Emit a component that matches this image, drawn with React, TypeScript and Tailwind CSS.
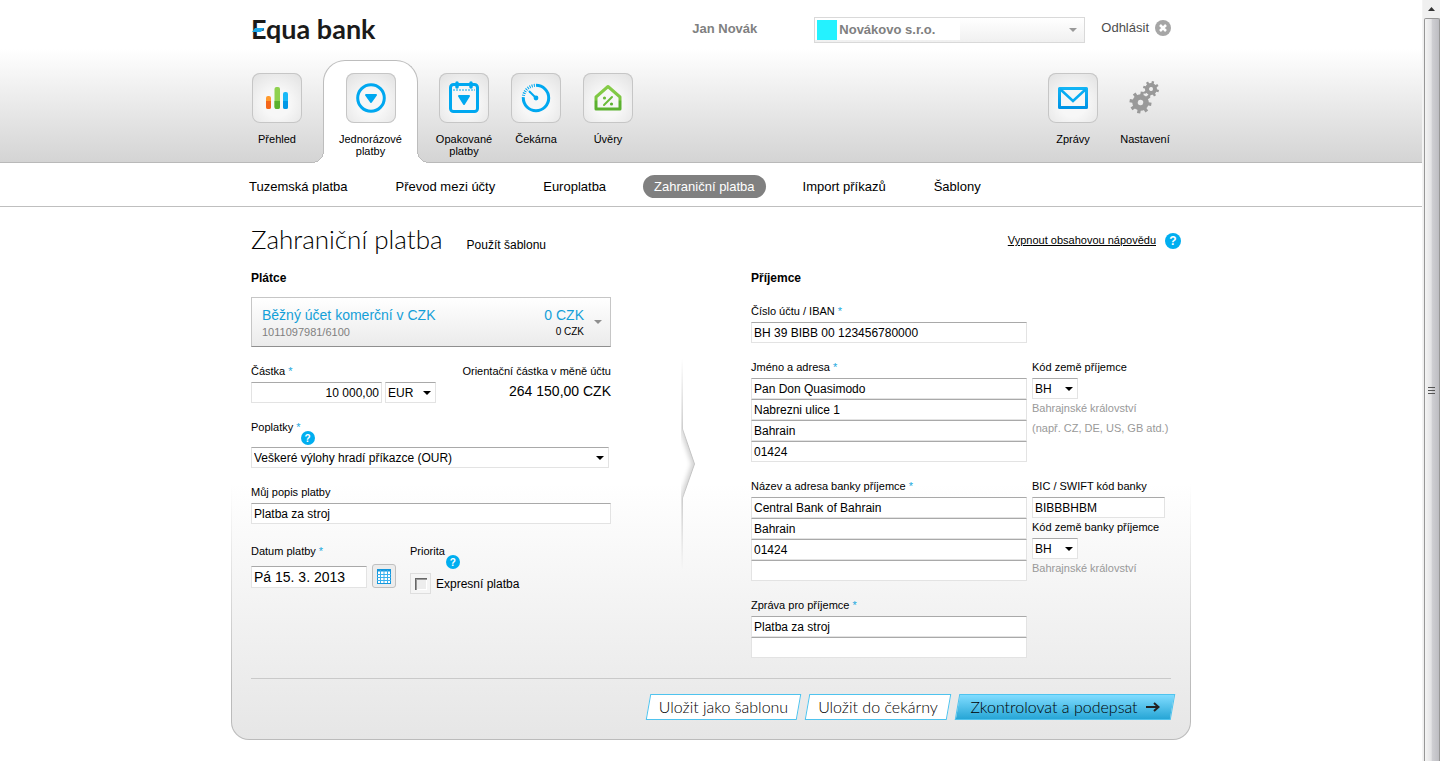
import React from 'react';
import clsx from 'clsx';

interface NavItem {
    label: string;
    icon: React.ReactNode;
    active?: boolean;
    plain?: boolean;
}

const BLUE = '#00a8f0';

const BarsIcon = () => (
    <svg viewBox="0 0 50 50" className="h-full w-full" aria-hidden="true">
        <rect x="14" y="23" width="5" height="13" rx="2" fill="#ff9a2e" />
        <path d="M14 28h5v6a2 2 0 0 1-2 2h-1a2 2 0 0 1-2-2z" fill="#f4661b" />
        <rect x="22.5" y="14" width="5.5" height="22" rx="2" fill="#8fd14f" />
        <path d="M22.5 28H28v6a2 2 0 0 1-2 2h-1.500a2 2 0 0 1-2-2z" fill="#5bb12f" />
        <rect x="31" y="19" width="5" height="17" rx="2" fill="#19b9f7" />
        <path d="M31 28h5v6a2 2 0 0 1-2 2h-1a2 2 0 0 1-2-2z" fill="#0098e6" />
    </svg>
);

const PaymentIcon = () => (
    <svg viewBox="0 0 50 50" className="h-full w-full" aria-hidden="true">
        <circle cx="25" cy="25" r="13.3" fill="none" stroke={BLUE} strokeWidth="3" />
        <path d="M20 22h10l-5 7z" fill={BLUE} stroke={BLUE} strokeWidth="2" strokeLinejoin="round" />
    </svg>
);

const CalendarIcon = () => (
    <svg viewBox="0 0 50 50" className="h-full w-full" aria-hidden="true">
        <rect x="11.5" y="11.5" width="27" height="27" rx="3" fill="none" stroke={BLUE} strokeWidth="3" />
        <path d="M18 10v4M32 10v4" stroke={BLUE} strokeWidth="3.5" strokeLinecap="round" />
        <path d="M14 17h22" stroke={BLUE} strokeWidth="1" strokeDasharray="2 1" />
        <path d="M20 23h10l-5 8z" fill={BLUE} stroke={BLUE} strokeWidth="2" strokeLinejoin="round" />
    </svg>
);

const GaugeIcon = () => (
    <svg viewBox="0 0 50 50" className="h-full w-full" aria-hidden="true">
        <path d="M25 12.3A12.7 12.7 0 1 1 12.3 25" fill="none" stroke={BLUE} strokeWidth="3" />
        <path d="M12.3 25A12.7 12.7 0 0 1 25 12.3" fill="none" stroke={BLUE} strokeWidth="3" strokeDasharray="1 1.2" />
        <circle cx="25" cy="25" r="2.4" fill={BLUE} />
        <path d="M18.5 18.5L25 25" stroke={BLUE} strokeWidth="2" strokeLinecap="round" />
    </svg>
);

const HouseIcon = () => (
    <svg viewBox="0 0 50 50" className="h-full w-full" aria-hidden="true">
        <defs>
            <linearGradient id="house" x1="0" y1="0" x2="0" y2="1">
                <stop offset="0" stopColor="#86cc48" />
                <stop offset="0.6" stopColor="#7cc642" />
                <stop offset="0.65" stopColor="#5bb12f" />
                <stop offset="1" stopColor="#5bb12f" />
            </linearGradient>
        </defs>
        <path d="M13 36V24L25 13.5 37 24v12z" fill="none" stroke="url(#house)" strokeWidth="3" strokeLinejoin="round" />
        <path d="M21 32l8-8" stroke="#6abc38" strokeWidth="2" strokeLinecap="round" />
        <circle cx="21.5" cy="25" r="1.6" fill="#6abc38" />
        <circle cx="28.5" cy="31" r="1.6" fill="#5bb12f" />
    </svg>
);

const MailIcon = () => (
    <svg viewBox="0 0 50 50" className="h-full w-full" aria-hidden="true">
        <defs>
            <linearGradient id="mail" x1="0" y1="0" x2="0" y2="1">
                <stop offset="0" stopColor="#12b4f5" />
                <stop offset="1" stopColor="#0094e6" />
            </linearGradient>
        </defs>
        <rect x="11.5" y="15.5" width="27" height="19" fill="none" stroke="url(#mail)" strokeWidth="3" strokeLinejoin="round" />
        <path d="M12 16l13 12 13-12" fill="none" stroke="#08acf3" strokeWidth="2.5" />
    </svg>
);

const GearShape = ({ cx, cy, r, turn }: { cx: number; cy: number; r: number; turn: number }) => (
    <g transform={`translate(${cx} ${cy}) rotate(${turn})`} stroke="#999" fill="none">
        <circle r={r * 0.5} strokeWidth={r * 0.5} />
        {[0, 45, 90, 135].map(a => (
            <g key={a} transform={`rotate(${a})`}>
                <path d={`M0 ${-r}V${-r * 0.6}M0 ${r * 0.6}V${r}`} strokeWidth={r * 0.3} />
            </g>
        ))}
    </g>
);

const GearsIcon = () => (
    <svg viewBox="0 0 50 50" className="h-full w-full" aria-hidden="true">
        <GearShape cx={20.5} cy={29.5} r={11} turn={10} />
        <GearShape cx={31} cy={16} r={8} turn={15} />
    </svg>
);

const HelpIcon = ({ className }: { className: string }) => (
    <button
        type="button"
        aria-label="Nápověda"
        className={clsx('flex shrink-0 items-center justify-center rounded-full bg-[#00aef0] font-bold text-white', className)}
    >
        ?
    </button>
);

const Arrow = ({ className = 'right-[5px] text-black' }: { className?: string }) => (
    <svg viewBox="0 0 8 4" className={clsx('pointer-events-none absolute top-1/2 h-1 w-2 -translate-y-1/2', className)} aria-hidden="true">
        <path d="M0 0h8L4 4z" fill="currentColor" />
    </svg>
);

const FIELD = 'block border border-[#e3e3e3] border-t-[#a9a9a9] bg-white text-black outline-none';

const Label = ({ htmlFor, text, required }: { htmlFor: string; text: string; required?: boolean }) => (
    <label htmlFor={htmlFor} className="block h-[14px] whitespace-nowrap text-[11px] leading-[14px]">
        {text}
        {required && <span className="text-[#1ba8de]"> *</span>}
    </label>
);

const TextInput = ({ className, ...props }: React.InputHTMLAttributes<HTMLInputElement>) => (
    <input type="text" className={clsx(FIELD, 'h-[21px] px-[2px] text-[12px]', className)} {...props} />
);

const Select = ({ id, options, className }: { id: string; options: string[]; className: string }) => (
    <div className={clsx('relative', className)}>
        <select id={id} className={clsx(FIELD, 'h-[21px] w-full appearance-none px-[2px] text-[12px]')}>
            {options.map(o => (
                <option key={o}>{o}</option>
            ))}
        </select>
        <Arrow />
    </div>
);

const Lines = ({ id, label, values }: { id: string; label: string; values: string[] }) => (
    <div>
        <Label htmlFor={`${id}-0`} text={label} required />
        <div className="mt-1">
            {values.map((v, i) => (
                <TextInput key={i} id={`${id}-${i}`} aria-label={`${label} ${i + 1}`} defaultValue={v} className="w-[276px]" />
            ))}
        </div>
    </div>
);

const leftNav: NavItem[] = [
    { label: 'Přehled', icon: <BarsIcon /> },
    { label: 'Jednorázové platby', icon: <PaymentIcon />, active: true },
    { label: 'Opakované platby', icon: <CalendarIcon /> },
    { label: 'Čekárna', icon: <GaugeIcon /> },
    { label: 'Úvěry', icon: <HouseIcon /> },
];

const rightNav: NavItem[] = [
    { label: 'Zprávy', icon: <MailIcon /> },
    { label: 'Nastavení', icon: <GearsIcon />, plain: true },
];

const subNav = ['Tuzemská platba', 'Převod mezi účty', 'Europlatba', 'Zahraniční platba', 'Import příkazů', 'Šablony'];

const NavTab = ({ label, icon, active, plain }: NavItem) => (
    <a
        href="#"
        className={clsx(
            'relative flex flex-col items-center text-center',
            active
                ? 'mx-[10px] -mb-px w-[95px] rounded-t-[22px] border border-b-0 border-[#bdbdbd] bg-white pt-3'
                : 'w-[72px] pt-[13px]'
        )}
    >
        {active && (
            <>
                {/* flared feet that run into the header's bottom line */}
                <span className="absolute bottom-0 -left-[12px] h-3 w-3 bg-[radial-gradient(circle_at_0_0,transparent_11px,#bdbdbd_11px,#bdbdbd_12px,#fff_12px)]" />
                <span className="absolute -right-[12px] bottom-0 h-3 w-3 bg-[radial-gradient(circle_at_100%_0,transparent_11px,#bdbdbd_11px,#bdbdbd_12px,#fff_12px)]" />
            </>
        )}
        <span
            className={clsx(
                'h-[50px] w-[50px]',
                !plain && 'rounded-[8px] bg-[radial-gradient(circle_at_50%_60%,#f7f7f7_35%,#e0e0e0_100%)] shadow-[inset_0_0_0_1px_#c6c6c6]'
            )}
        >
            {icon}
        </span>
        <span className="mt-[10px] px-1 text-[11px] leading-3">{label}</span>
    </a>
);

const Header = () => (
    <header className="border-b border-[#b9b9b9] bg-[linear-gradient(to_bottom,#fff_30%,#d4d4d4_100%)]">
        <div className="mx-auto w-[960px]">
            <div className="flex h-[60px] items-start px-5">
                <a href="#" className="relative mt-[13px] font-['Lato'] text-[27px] leading-8 font-bold whitespace-nowrap text-[#1a1a1a]">
                    Equa bank
                    <span className="absolute top-[15px] left-px h-1 w-3 bg-[#1ba8e8] [clip-path:polygon(25%_0,100%_0,75%_100%,0_100%)]" />
                </a>
                <div className="ml-auto flex items-start pt-[17px]">
                    <span className="mr-[57px] text-[13px] leading-6 font-bold text-[#808080]">Jan Novák</span>
                    <div className="relative w-[271px]">
                        <select
                            aria-label="Klient"
                            className="block h-[26px] w-full appearance-none border border-[#d9d9d9] bg-[linear-gradient(#fff,#fff),linear-gradient(to_bottom,#fff,#f0f0f0)] bg-[length:145px_22px,100%_100%] bg-no-repeat pl-6 text-[13px] font-bold text-[#808080]"
                        >
                            <option>Novákovo s.r.o.</option>
                        </select>
                        <span className="absolute top-[3px] left-[3px] h-5 w-5 bg-[#24f2ff]" />
                        <Arrow className="right-2 text-[#999]" />
                    </div>
                    <a href="#" className="ml-4 flex h-[22px] items-center gap-[6px] text-[13px] text-[#4d4d4d]">
                        Odhlásit
                        <svg viewBox="0 0 16 16" className="h-4 w-4" aria-hidden="true">
                            <circle cx="8" cy="8" r="8" fill="#a6a6a6" />
                            <path d="M5 5l6 6M11 5l-6 6" stroke="#fff" strokeWidth="2.5" />
                        </svg>
                    </a>
                </div>
            </div>
            <nav className="flex h-[102px] px-[10px]">
                {leftNav.map(item => (
                    <NavTab key={item.label} {...item} />
                ))}
                <div className="ml-auto flex">
                    {rightNav.map(item => (
                        <NavTab key={item.label} {...item} />
                    ))}
                </div>
            </nav>
        </div>
    </header>
);

const SubNav = () => (
    <nav className="border-b border-[#bfbfbf] bg-white">
        <div className="mx-auto flex h-[43px] w-[960px] items-center gap-[26px] pt-1 pl-[7px]">
            {subNav.map(item => (
                <a
                    key={item}
                    href="#"
                    className={clsx(
                        'h-[23px] rounded-full px-[11px] text-[13px] leading-[23px] whitespace-nowrap',
                        item === 'Zahraniční platba' && 'bg-[#808080] text-white'
                    )}
                >
                    {item}
                </a>
            ))}
        </div>
    </nav>
);

const Payer = () => (
    <section className="w-[360px]">
        <h2 className="text-[12px] leading-4 font-bold">Plátce</h2>
        <button
            type="button"
            aria-haspopup="listbox"
            className="relative mt-[11px] flex h-[50px] w-full items-center justify-between border border-[#c6c6c6] border-b-[#8f8f8f] bg-[linear-gradient(to_bottom,#fff,#ebebeb)] pt-[2px] pr-[26px] pl-[10px]"
        >
            <span className="text-left">
                <span className="block text-[14px] leading-[18px] text-[#149fd8]">Běžný účet komerční v CZK</span>
                <span className="block text-[11px] leading-4 text-[#808080]">1011097981/6100</span>
            </span>
            <span className="text-right">
                <span className="block text-[14px] leading-[18px] text-[#149fd8]">0 CZK</span>
                <span className="block text-[10px] leading-4">0 CZK</span>
            </span>
            <Arrow className="right-2 text-[#8f8f8f]" />
        </button>

        <div className="mt-[17px] flex justify-between">
            <div>
                <Label htmlFor="amount" text="Částka" required />
                <div className="mt-1 flex gap-[3px]">
                    <TextInput id="amount" defaultValue="10 000,00" className="w-[131px] text-right" />
                    <Select id="currency" options={['EUR', 'CZK', 'USD']} className="w-[51px]" />
                </div>
            </div>
            <div className="text-right">
                <p className="text-[11px] leading-[14px]">Orientační částka v měně účtu</p>
                <p className="mt-1 text-[14px] leading-[18px]">264 150,00 CZK</p>
            </div>
        </div>

        <div className="mt-[17px]">
            <div className="flex h-[27px]">
                <Label htmlFor="fees" text="Poplatky" required />
                <HelpIcon className="mt-[11px] h-[14px] w-[14px] text-[10px]" />
            </div>
            <Select id="fees" options={['Veškeré výlohy hradí příkazce (OUR)']} className="w-[358px]" />
        </div>

        <div className="mt-[17px]">
            <Label htmlFor="note" text="Můj popis platby" />
            <TextInput id="note" defaultValue="Platba za stroj" className="mt-1 w-full" />
        </div>

        <div className="mt-5 flex">
            <div className="w-[159px]">
                <Label htmlFor="date" text="Datum platby" required />
                <div className="mt-[6px] flex items-end gap-[5px]">
                    <input id="date" type="text" defaultValue="Pá 15. 3. 2013" className={clsx(FIELD, 'h-[22px] w-[116px] px-[2px] text-[14px]')} />
                    <button type="button" aria-label="Vybrat datum" className="h-6 w-6 rounded-[3px] border border-[#c0c0c0] bg-[#ececec] p-[3px]">
                        <svg viewBox="0 0 16 16" className="h-4 w-4" aria-hidden="true">
                            <rect x="1.5" y="1.5" width="13" height="14" fill="#fff" stroke="#1597dc" />
                            <path d="M1 2.5h14" stroke="#1597dc" strokeWidth="2" />
                            <path d="M1 6.5h14M1 9.5h14M1 12.5h14M4.5 2v13M8 2v13M11.5 2v13" stroke="#39b1ee" />
                        </svg>
                    </button>
                </div>
            </div>
            <div>
                <div className="flex h-[25px]">
                    <Label htmlFor="express" text="Priorita" />
                    <HelpIcon className="mt-[11px] ml-px h-[14px] w-[14px] text-[10px]" />
                </div>
                <label className="mt-1 flex items-center gap-[5px] text-[12px]">
                    <span className="flex h-[21px] w-[21px] items-center justify-center border border-[#dedede] bg-[#f5f5f5]">
                        <input
                            id="express"
                            type="checkbox"
                            className="h-3 w-3 appearance-none bg-[#ededed] shadow-[inset_1px_1px_0_#666,inset_2px_2px_0_#999,inset_-1px_-1px_0_#fff]"
                        />
                    </span>
                    Expresní platba
                </label>
            </div>
        </div>
    </section>
);

// Soft-shadowed rule pointing from the payer to the payee
const Divider = () => (
    <div className="w-[140px] pt-[88px] pl-[60px]">
        <svg viewBox="0 0 26 212" className="h-[212px] w-[26px]" aria-hidden="true">
            <defs>
                <linearGradient id="fade" x1="0" y1="0" x2="0" y2="1">
                    <stop offset="0" stopColor="#fff" stopOpacity="0" />
                    <stop offset="0.4" stopColor="#fff" />
                    <stop offset="0.6" stopColor="#fff" />
                    <stop offset="1" stopColor="#fff" stopOpacity="0" />
                </linearGradient>
                <mask id="fadeMask">
                    <rect width="26" height="212" fill="url(#fade)" />
                </mask>
                <filter id="soft" filterUnits="userSpaceOnUse" x="-6" y="-6" width="40" height="224">
                    <feGaussianBlur stdDeviation="2.5" />
                </filter>
                <clipPath id="leftSide">
                    <path d="M0 0H11.5V71L23.5 106L11.5 140V212H0z" />
                </clipPath>
            </defs>
            <g mask="url(#fadeMask)">
                <g clipPath="url(#leftSide)">
                    <path d="M11.5 0V71L23.5 106L11.5 140V212" fill="none" stroke="#000" strokeOpacity="0.25" strokeWidth="4" filter="url(#soft)" />
                </g>
                <path d="M11.5 0V71L23.5 106L11.5 140V212" fill="none" stroke="#c4c4c4" strokeWidth="1" />
            </g>
        </svg>
    </div>
);

const Payee = () => (
    <section className="flex-1">
        <h2 className="text-[12px] leading-4 font-bold">Příjemce</h2>
        <div className="mt-[18px] flex flex-col gap-[17px]">
            <Lines id="iban" label="Číslo účtu / IBAN" values={['BH 39 BIBB 00 123456780000']} />
            <div className="flex gap-[5px]">
                <Lines id="name" label="Jméno a adresa" values={['Pan Don Quasimodo', 'Nabrezni ulice 1', 'Bahrain', '01424']} />
                <div>
                    <Label htmlFor="country" text="Kód země příjemce" />
                    <Select id="country" options={['BH', 'CZ', 'DE']} className="mt-1 w-[46px]" />
                    <p className="mt-[2px] text-[11px] leading-[14px] text-[#999]">Bahrajnské království</p>
                    <p className="mt-[6px] text-[11px] leading-[14px] text-[#999]">(např. CZ, DE, US, GB atd.)</p>
                </div>
            </div>
            <div className="flex gap-[5px]">
                <Lines id="bank" label="Název a adresa banky příjemce" values={['Central Bank of Bahrain', 'Bahrain', '01424', '']} />
                <div>
                    <Label htmlFor="bic" text="BIC / SWIFT kód banky" />
                    <TextInput id="bic" defaultValue="BIBBBHBM" className="mt-1 mb-[2px] w-[133px]" />
                    <Label htmlFor="bankCountry" text="Kód země banky příjemce" />
                    <Select id="bankCountry" options={['BH', 'CZ', 'DE']} className="mt-1 w-[46px]" />
                    <p className="mt-[2px] text-[11px] leading-[14px] text-[#999]">Bahrajnské království</p>
                </div>
            </div>
            <Lines id="message" label="Zpráva pro příjemce" values={['Platba za stroj', '']} />
        </div>
    </section>
);

const SlantButton = ({ primary, className, children }: { primary?: boolean; className: string; children: React.ReactNode }) => (
    <button type={primary ? 'submit' : 'button'} className={clsx("relative h-[26px] font-['Lato'] text-[16px] font-light whitespace-nowrap", className)}>
        <span
            className={clsx(
                'absolute inset-0 -skew-x-[10deg] border border-[#4fc3ee]',
                primary ? 'bg-[linear-gradient(to_bottom,#80dcff,#27a6d6)]' : 'bg-white'
            )}
        />
        <span className="relative flex items-center justify-center gap-2">{children}</span>
    </button>
);

const Scrollbar = () => (
    <div className="flex w-[18px] flex-col border-l border-[#f4f4f4] bg-[#f0f0f0]" aria-hidden="true">
        <div className="flex h-[18px] items-center justify-center">
            <svg viewBox="0 0 7 4" className="h-1 w-[7px]">
                <path d="M0 4h7L3.5 0z" fill="#333" />
            </svg>
        </div>
        <div className="ml-px flex flex-1 items-center justify-center rounded-t-[2px] border border-b-0 border-[#979797] bg-[linear-gradient(to_right,#f4f4f4,#e3e3e5_45%,#cfcfd3_50%,#bdbdc2)]">
            <svg viewBox="0 0 8 8" className="h-2 w-2">
                <path d="M0 1.5h7M0 4.5h7M0 7.5h7" stroke="#555" />
            </svg>
        </div>
    </div>
);

const App: React.FC = () => {
    return (
        <div className="flex min-h-screen bg-white font-['Liberation_Sans',Arial,sans-serif] text-black">
            <div className="flex-1">
                <Header />
                <SubNav />
                <main className="mx-auto w-[960px] rounded-b-[18px] bg-[linear-gradient(to_bottom,#fff_52%,#bbb_90%)] px-px pb-px">
                    <form
                        onSubmit={e => e.preventDefault()}
                        className="rounded-b-[17px] bg-[linear-gradient(to_bottom,#fff_52%,#e6e6e6_100%)] px-[19px] pt-[19px] pb-[19px]"
                    >
                        <div className="flex h-[29px] items-baseline">
                            <h1 className="font-['Lato'] text-[26px] leading-[26px] font-light">Zahraniční platba</h1>
                            <a href="#" className="ml-6 text-[12px]">Použít šablonu</a>
                            <div className="-mr-[10px] ml-auto flex items-center gap-[9px] self-center">
                                <a href="#" className="text-[11px] underline">Vypnout obsahovou nápovědu</a>
                                <HelpIcon className="h-4 w-4 text-[12px]" />
                            </div>
                        </div>
                        <div className="mt-[15px] flex">
                            <Payer />
                            <Divider />
                            <Payee />
                        </div>
                        <div className="mt-5 flex justify-end gap-[8px] border-t border-[#c9c9c9] pt-[15px]">
                            <SlantButton className="w-[151px]">Uložit jako šablonu</SlantButton>
                            <SlantButton className="w-[142px]">Uložit do čekárny</SlantButton>
                            <SlantButton primary className="-mr-[2px] w-[216px]">
                                Zkontrolovat a podepsat
                                <svg viewBox="0 0 14 10" className="h-[10px] w-[14px]" aria-hidden="true">
                                    <path d="M0 5h12M8 1l4.500 4L8 9" fill="none" stroke="#222" strokeWidth="2" />
                                </svg>
                            </SlantButton>
                        </div>
                    </form>
                </main>
            </div>
            <Scrollbar />
        </div>
    );
};

export default App;
